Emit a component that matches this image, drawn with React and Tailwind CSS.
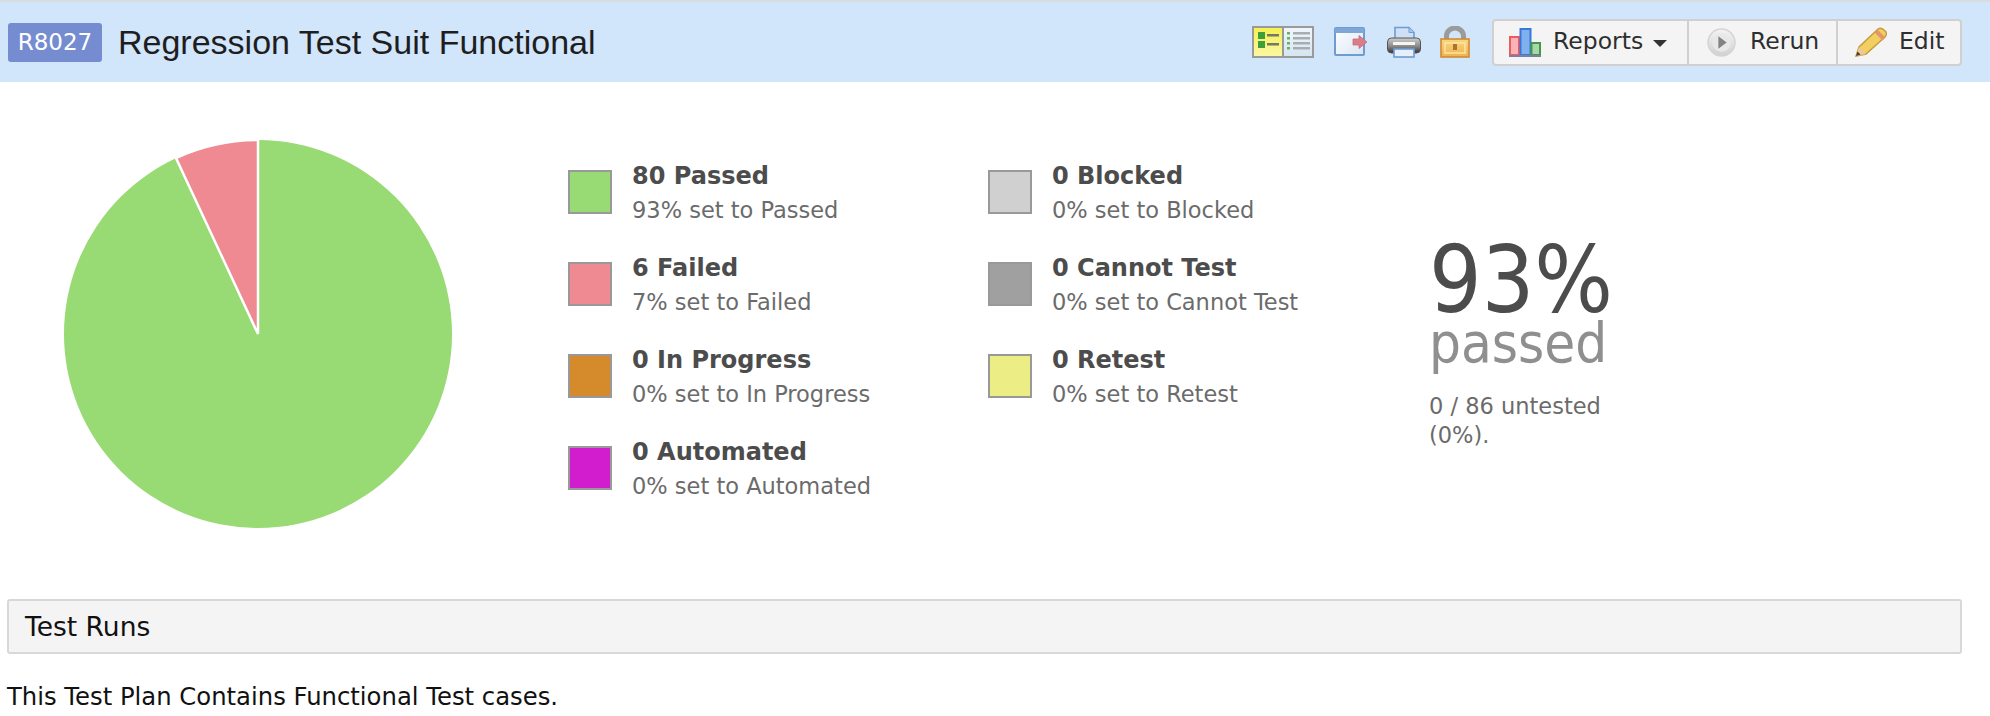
const leftLegend = [
  { title: '80 Passed', sub: '93% set to Passed', color: 'bg-[#98da73]' },
  { title: '6 Failed', sub: '7% set to Failed', color: 'bg-[#ef8992]' },
  { title: '0 In Progress', sub: '0% set to In Progress', color: 'bg-[#d58b2c]' },
  { title: '0 Automated', sub: '0% set to Automated', color: 'bg-[#d21dce]' },
];

const rightLegend = [
  { title: '0 Blocked', sub: '0% set to Blocked', color: 'bg-[#d0d0d0]' },
  { title: '0 Cannot Test', sub: '0% set to Cannot Test', color: 'bg-[#a0a0a0]' },
  { title: '0 Retest', sub: '0% set to Retest', color: 'bg-[#ecee85]' },
];

function LegendColumn({ items, width }) {
  return (
    <div className={`flex flex-col gap-[48px] ${width}`}>
      {items.map((item) => (
        <div key={item.title} className="flex h-[44px] items-start">
          <div className={`mt-[1px] h-[44px] w-[44px] shrink-0 border-2 border-[#999999] ${item.color}`} />
          <div className="ml-[20px] -mt-[7px] whitespace-nowrap">
            <div className="text-[24px] leading-[29px] font-bold text-[#4c4c4c]">{item.title}</div>
            <div className="mt-[5px] text-[22.5px] leading-[29px] text-[#6b6b6b]">{item.sub}</div>
          </div>
        </div>
      ))}
    </div>
  );
}

function Pie() {
  return (
    <svg width="390" height="390" viewBox="0 0 390 390" className="block">
      <circle cx="195" cy="195" r="194" fill="#98da73" />
      <path d="M195 195 L195 1 A194 194 0 0 0 113 19 Z" fill="#ef8992" stroke="#ffffff" strokeWidth="2.5" strokeLinejoin="miter" />
    </svg>
  );
}

function ToggleIcon() {
  return (
    <svg width="62" height="32" viewBox="0 0 62 32" className="block blur-[0.4px]">
      <defs>
        <linearGradient id="toggleA" x1="0" y1="0" x2="0" y2="1">
          <stop offset="0" stopColor="#f5f04e" />
          <stop offset="1" stopColor="#fbf8a8" />
        </linearGradient>
        <linearGradient id="toggleB" x1="0" y1="0" x2="0" y2="1">
          <stop offset="0" stopColor="#f2f6fa" />
          <stop offset="1" stopColor="#d5e4f2" />
        </linearGradient>
      </defs>
      <rect x="1" y="1" width="30" height="30" fill="url(#toggleA)" stroke="#9a9a9a" strokeWidth="2" />
      <rect x="31" y="1" width="30" height="30" fill="url(#toggleB)" stroke="#9a9a9a" strokeWidth="2" />
      <rect x="6" y="6" width="7" height="7" fill="#3f9d3c" />
      <rect x="6" y="15" width="7" height="7" fill="#3f9d3c" />
      <rect x="15" y="8" width="12" height="2.5" fill="#777766" />
      <rect x="15" y="17" width="12" height="2.5" fill="#777766" />
      {[6, 11, 16, 21].map((y) => (
        <g key={y}>
          <rect x="35" y={y} width="3" height="2.5" fill="#62b65f" />
          <rect x="41" y={y} width="17" height="2.5" fill="#a8adb2" />
        </g>
      ))}
    </svg>
  );
}

function ExportIcon() {
  return (
    <svg width="34" height="30" viewBox="0 0 34 30" className="block blur-[0.4px]">
      <defs>
        <linearGradient id="exportBg" x1="0" y1="0" x2="1" y2="1">
          <stop offset="0" stopColor="#ffffff" />
          <stop offset="1" stopColor="#d9e6f5" />
        </linearGradient>
      </defs>
      <rect x="1" y="1" width="29" height="27" rx="1" fill="url(#exportBg)" stroke="#6f9bd1" strokeWidth="2" />
      <rect x="1" y="1" width="29" height="5" fill="#7ea6d9" />
      <path d="M19 12 H25 V8.5 L33 15 L25 21.5 V18 H19 Z" fill="#dc7c86" stroke="#c76f7a" strokeWidth="0.8" />
    </svg>
  );
}

function PrinterIcon() {
  return (
    <svg width="34" height="32" viewBox="0 0 34 32" className="block blur-[0.4px]">
      <defs>
        <linearGradient id="printerBody" x1="0" y1="0" x2="0" y2="1">
          <stop offset="0" stopColor="#cfcfcf" />
          <stop offset="0.55" stopColor="#8a8a8a" />
          <stop offset="1" stopColor="#333333" />
        </linearGradient>
      </defs>
      <path d="M8 14 V1.5 H22 L27 6.5 V14 Z" fill="#cfe0f6" stroke="#6f9bd1" strokeWidth="1.6" />
      <path d="M22 1.5 V6.5 H27" fill="#a9c6ec" stroke="#6f9bd1" strokeWidth="1" />
      <rect x="0.5" y="12" width="33" height="15" rx="4" fill="url(#printerBody)" stroke="#555555" strokeWidth="1" />
      <rect x="6" y="16" width="22" height="3" fill="#f5f5f5" />
      <rect x="7" y="23" width="20" height="8" fill="#e6effa" stroke="#6f9bd1" strokeWidth="1.6" />
    </svg>
  );
}

function LockIcon() {
  return (
    <svg width="30" height="32" viewBox="0 0 30 32" className="block blur-[0.4px]">
      <defs>
        <linearGradient id="lockBody" x1="0" y1="0" x2="0" y2="1">
          <stop offset="0" stopColor="#f9d77f" />
          <stop offset="1" stopColor="#f0b24f" />
        </linearGradient>
      </defs>
      <path d="M6.5 14 V10 A8.5 8 0 0 1 23.5 10 V14" fill="none" stroke="#9b9b9b" strokeWidth="5" />
      <rect x="1" y="13" width="28" height="18" fill="url(#lockBody)" stroke="#d28a35" strokeWidth="1.6" />
      <rect x="5" y="17" width="20" height="10" fill="none" stroke="#fbe8a8" strokeWidth="1.4" />
      <rect x="13" y="18" width="4" height="6" fill="#a8752f" />
    </svg>
  );
}

function ChartIcon() {
  return (
    <svg width="32" height="29" viewBox="0 0 32 29" className="block blur-[0.4px]">
      <rect x="1" y="9" width="9" height="18" fill="#fbb4b6" stroke="#f0595f" strokeWidth="2" />
      <rect x="11.5" y="1" width="10" height="26" fill="#7fb0f0" stroke="#3a78d8" strokeWidth="2" />
      <rect x="22.5" y="15" width="8.5" height="12" fill="#a8d8a8" stroke="#48964c" strokeWidth="2" />
      <rect x="0" y="27" width="32" height="2" fill="#7b7fa8" />
    </svg>
  );
}

function PlayIcon() {
  return (
    <svg width="29" height="29" viewBox="0 0 28 28" className="block blur-[0.4px]">
      <defs>
        <linearGradient id="playBg" x1="0" y1="0" x2="0" y2="1">
          <stop offset="0" stopColor="#f4f4f4" />
          <stop offset="1" stopColor="#d0d0d0" />
        </linearGradient>
      </defs>
      <circle cx="14" cy="14" r="13" fill="url(#playBg)" stroke="#d4d4d4" strokeWidth="1.5" />
      <circle cx="14" cy="14" r="9" fill="#e8e8e8" />
      <path d="M11 8 L19 14 L11 20 Z" fill="#828282" />
    </svg>
  );
}

function PencilIcon() {
  return (
    <svg width="32" height="30" viewBox="0 0 32 30" className="block blur-[0.4px]">
      <path d="M1 29 L4 20 L23 2 Q26 0 29 3 L31 5 Q32 8 30 10 L11 27 Z" fill="#f0d060" stroke="#c89a3c" strokeWidth="1.4" />
      <path d="M21 4 L29 12" stroke="#e4956a" strokeWidth="4" />
      <path d="M1 29 L4 20 L11 27 Z" fill="#e8c9a0" />
      <path d="M1 29 L2.5 24.5 L5.5 27.5 Z" fill="#4a3a2a" />
    </svg>
  );
}

export default function App() {
  return (
    <div className='min-h-screen bg-white font-["DejaVu_Sans",sans-serif]'>
      {/* Top bar */}
      <div className="flex h-[82px] items-center border-t-2 border-[#d8dde2] bg-[#d1e5fb] pl-[8px] pr-[28px]">
        <div className="flex h-[39px] w-[94px] items-center justify-center rounded-[3px] bg-[#758dd0] text-[23px] text-white">
          R8027
        </div>
        <h1 className='ml-[16px] font-["Liberation_Sans",sans-serif] text-[34px] leading-none font-normal text-[#1e1e1e]'>
          Regression Test Suit Functional
        </h1>
        <div className="ml-auto flex items-center">
          <ToggleIcon />
          <div className="ml-[20px]"><ExportIcon /></div>
          <div className="ml-[19px]"><PrinterIcon /></div>
          <div className="ml-[19px]"><LockIcon /></div>
          <div className="ml-[22px] flex h-[47px] items-stretch rounded-[4px] border-2 border-[#d0d0d0] bg-[#f4f4f4] text-[23.5px] text-[#2e2e2e]">
            <div className="flex w-[195px] items-center border-r-2 border-[#d0d0d0] pl-[15px]">
              <ChartIcon />
              <span className="ml-[12px]">Reports</span>
              <span className="ml-[10px] mt-[2px] h-0 w-0 border-x-[7px] border-t-[7px] border-x-transparent border-t-[#333333]" />
            </div>
            <div className="flex w-[149px] items-center border-r-2 border-[#d0d0d0] pl-[18px]">
              <PlayIcon />
              <span className="ml-[14px]">Rerun</span>
            </div>
            <div className="flex w-[122px] items-center pl-[17px]">
              <PencilIcon />
              <span className="ml-[12px]">Edit</span>
            </div>
          </div>
        </div>
      </div>

      {/* Stats */}
      <div className="flex h-[517px] items-start">
        <div className="ml-[63px] mt-[57px]"><Pie /></div>
        <div className="ml-[115px] mt-[87px]">
          <LegendColumn items={leftLegend} width="w-[420px]" />
        </div>
        <div className="mt-[87px]">
          <LegendColumn items={rightLegend} width="w-[441px]" />
        </div>
        <div className="mt-[159px] w-[200px]">
          <div className='font-["DejaVu_Sans_Condensed","DejaVu_Sans",sans-serif] text-[92px] leading-[80px] text-[#4c4c4c]'>93%</div>
          <div className='font-["DejaVu_Sans_Condensed","DejaVu_Sans",sans-serif] text-[56px] leading-[44px] text-[#8f8f8f]'>passed</div>
          <div className="mt-[27px] text-[22.5px] leading-[29px] text-[#6b6b6b]">0 / 86 untested (0%).</div>
        </div>
      </div>

      {/* Test runs */}
      <div className="ml-[7px] mr-[28px] flex h-[55px] items-center rounded-[3px] border-2 border-[#d8d8d8] bg-[#f4f4f4] pl-[16px] text-[26.5px] text-[#111111]">
        Test Runs
      </div>
      <p className="mx-[7px] mt-[28px] text-[24.3px] leading-[29px] text-[#111111]">
        This Test Plan Contains Functional Test cases.
      </p>
    </div>
  );
}
